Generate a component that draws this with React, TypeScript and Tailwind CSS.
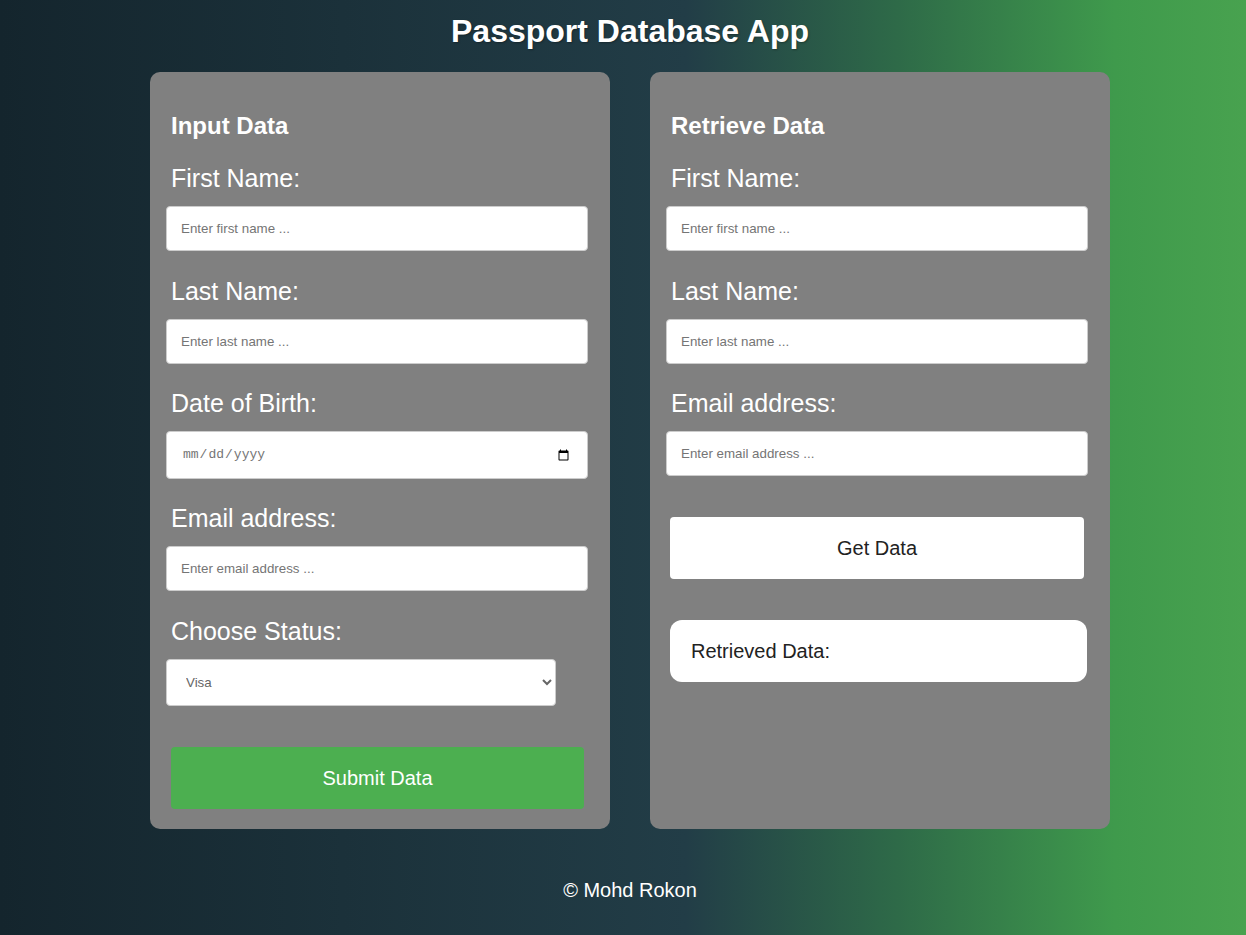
import React from 'react'

const inputClass =
  'block w-[422px] h-[45px] px-[14px] bg-white border border-[#cccccc] rounded-[4px] text-[13.33px] text-black placeholder:text-[#757575] outline-none'

function Field({ label, tight, children }: { label: string; tight?: boolean; children: React.ReactNode }) {
  return (
    <div className={tight ? 'mb-[25px]' : 'mb-[26px]'}>
      <label className="block ml-[5px] mb-[13px] text-[25px] leading-[29px] text-white">{label}</label>
      {children}
    </div>
  )
}

function InputPanel() {
  return (
    <div className="flex flex-col bg-[#808080] rounded-[10px] pt-[40px] pb-[20px] px-[16px]">
      <h2 className="ml-[5px] mb-[24px] text-[24px] leading-[28px] font-bold text-white">Input Data</h2>
      <Field label="First Name:">
        <input type="text" placeholder="Enter first name ..." className={inputClass} />
      </Field>
      <Field label="Last Name:" tight>
        <input type="text" placeholder="Enter last name ..." className={inputClass} />
      </Field>
      <Field label="Date of Birth:" tight>
        <input
          type="date"
          className="block w-[422px] h-[48px] px-[15px] bg-white border border-[#cccccc] rounded-[4px] text-[13px] text-[#757575] outline-none [font-family:'Liberation_Mono',monospace]"
        />
      </Field>
      <Field label="Email address:">
        <input type="email" placeholder="Enter email address ..." className={inputClass} />
      </Field>
      <Field label="Choose Status:" tight>
        <select className="block w-[390px] h-[47px] px-[15px] bg-white border border-[#cccccc] rounded-[4px] text-[13.33px] text-[#666666] outline-none">
          <option>Visa</option>
          <option>Passport</option>
          <option>Citizen</option>
        </select>
      </Field>
      <button className="ml-[5px] mt-[16px] w-[413px] h-[62px] bg-[#4caf50] rounded-[4px] text-[20px] text-white">
        Submit Data
      </button>
    </div>
  )
}

function RetrievePanel() {
  return (
    <div className="flex flex-col bg-[#808080] rounded-[10px] pt-[40px] pb-[20px] px-[16px]">
      <h2 className="ml-[5px] mb-[24px] text-[24px] leading-[28px] font-bold text-white">Retrieve Data</h2>
      <Field label="First Name:">
        <input type="text" placeholder="Enter first name ..." className={inputClass} />
      </Field>
      <Field label="Last Name:" tight>
        <input type="text" placeholder="Enter last name ..." className={inputClass} />
      </Field>
      <Field label="Email address:" tight>
        <input type="email" placeholder="Enter email address ..." className={inputClass} />
      </Field>
      <button className="ml-[4px] mt-[16px] w-[414px] h-[62px] bg-white rounded-[4px] text-[20px] text-[#222222]">
        Get Data
      </button>
      <div className="ml-[4px] mt-[41px] w-[417px] h-[62px] bg-white rounded-[12px] flex items-center px-[21px] text-[20px] text-[#222222]">
        Retrieved Data:
      </div>
    </div>
  )
}

export default function App() {
  return (
    <div className="min-h-screen bg-[linear-gradient(to_right,#14252d_0%,#223d47_55%,#2e6a48_72%,#3f9a4c_89.5%,#48a24f_100%)] [font-family:'Liberation_Sans',Arial,sans-serif]">
      <div className="pl-[14px] flex flex-col items-center">
        <h1 className="mt-[13px] text-[32px] leading-[37px] font-bold text-white [text-shadow:1px_1px_2px_rgba(0,0,0,0.3)]">
          Passport Database App
        </h1>
        <div className="mt-[22px] grid grid-cols-[460px_460px] gap-[40px]">
          <InputPanel />
          <RetrievePanel />
        </div>
        <footer className="mt-[50px] text-[20px] leading-[23px] text-white">© Mohd Rokon</footer>
      </div>
    </div>
  )
}
